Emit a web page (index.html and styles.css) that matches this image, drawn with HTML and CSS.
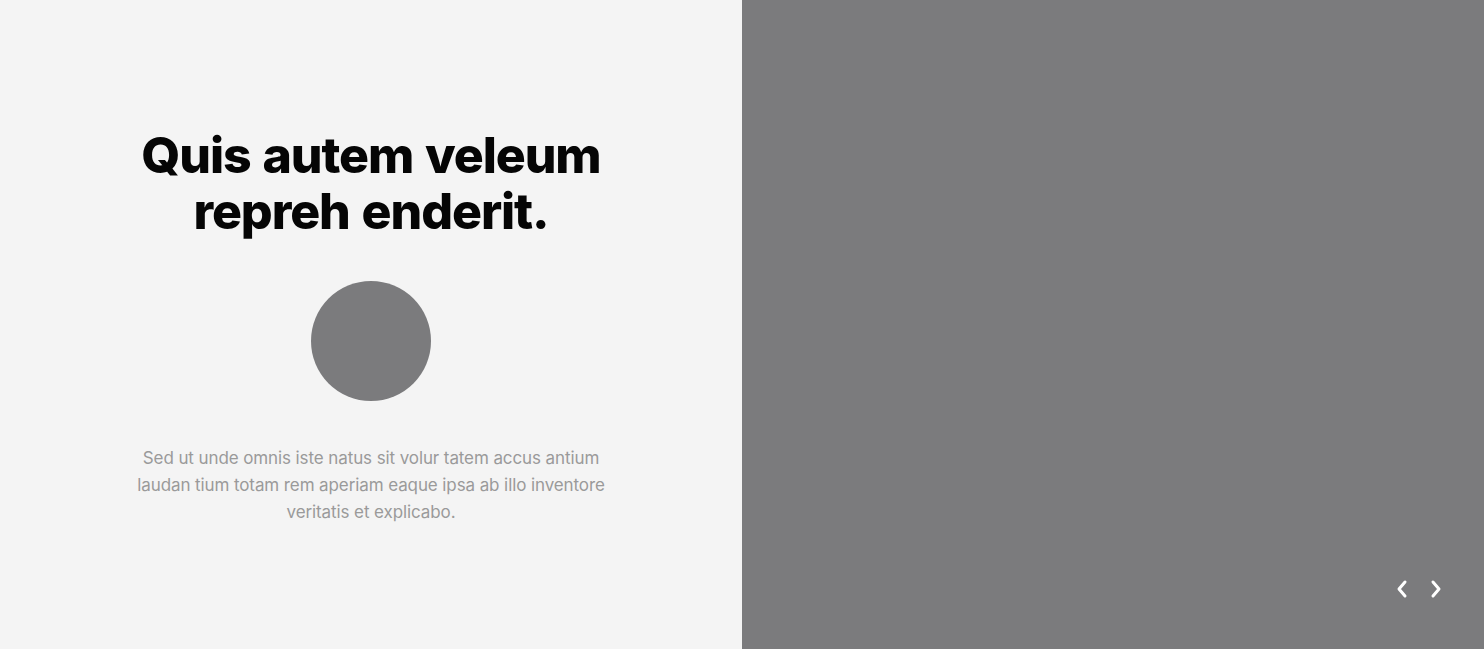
FILE: index.html
```html
<!DOCTYPE html>
<html>
<head>
<meta charset="utf-8">
<link rel="stylesheet" href="styles.css">
</head>
<body>
<div class="page">
  <section class="left">
    <div class="content">
      <h1 class="title">Quis autem veleum<br>repreh enderit.</h1>
      <div class="avatar"></div>
      <p class="text">Sed ut unde omnis iste natus sit volur tatem accus antium laudan tium totam rem aperiam eaque ipsa ab illo inventore veritatis et explicabo.</p>
    </div>
  </section>
  <section class="right">
    <div class="nav">
      <button class="arrow" aria-label="Previous"><svg width="14" height="20" viewBox="0 0 14 20"><path d="M10 3 L4 10 L10 17" fill="none" stroke="#fff" stroke-width="3" stroke-linecap="round" stroke-linejoin="round"/></svg></button>
      <button class="arrow" aria-label="Next"><svg width="14" height="20" viewBox="0 0 14 20"><path d="M4 3 L10 10 L4 17" fill="none" stroke="#fff" stroke-width="3" stroke-linecap="round" stroke-linejoin="round"/></svg></button>
    </div>
  </section>
</div>
</body>
</html>
```
FILE: styles.css
```css
* { box-sizing: border-box; }
html, body { margin: 0; padding: 0; }
body { font-family: Inter, "Noto Sans", sans-serif; }
.page {
  display: grid;
  grid-template-columns: 742px 742px;
  height: 649px;
}
.left {
  background: #f4f4f4;
  display: flex;
  justify-content: center;
  padding-top: 127px;
}
.content {
  width: 490px;
  display: flex;
  flex-direction: column;
  align-items: center;
  text-align: center;
}
.title {
  margin: 0;
  font-size: 50px;
  line-height: 56px;
  font-weight: 800;
  letter-spacing: -1.1px;
  word-spacing: 2px;
  color: #050505;
}
.avatar {
  width: 120px;
  height: 120px;
  border-radius: 50%;
  background: #7b7b7d;
  margin-top: 42px;
}
.text {
  margin: 44px 0 0;
  font-size: 17px;
  line-height: 27px;
  color: #9a9a9a;
  letter-spacing: -0.1px;
}
.right {
  background: #7b7b7d;
  display: flex;
  align-items: flex-end;
  justify-content: flex-end;
  padding: 0 41px 50px 0;
}
.nav {
  display: flex;
  gap: 20px;
}
.arrow {
  border: 0;
  background: none;
  padding: 0;
  width: 14px;
  height: 20px;
  display: flex;
  cursor: pointer;
}
```
